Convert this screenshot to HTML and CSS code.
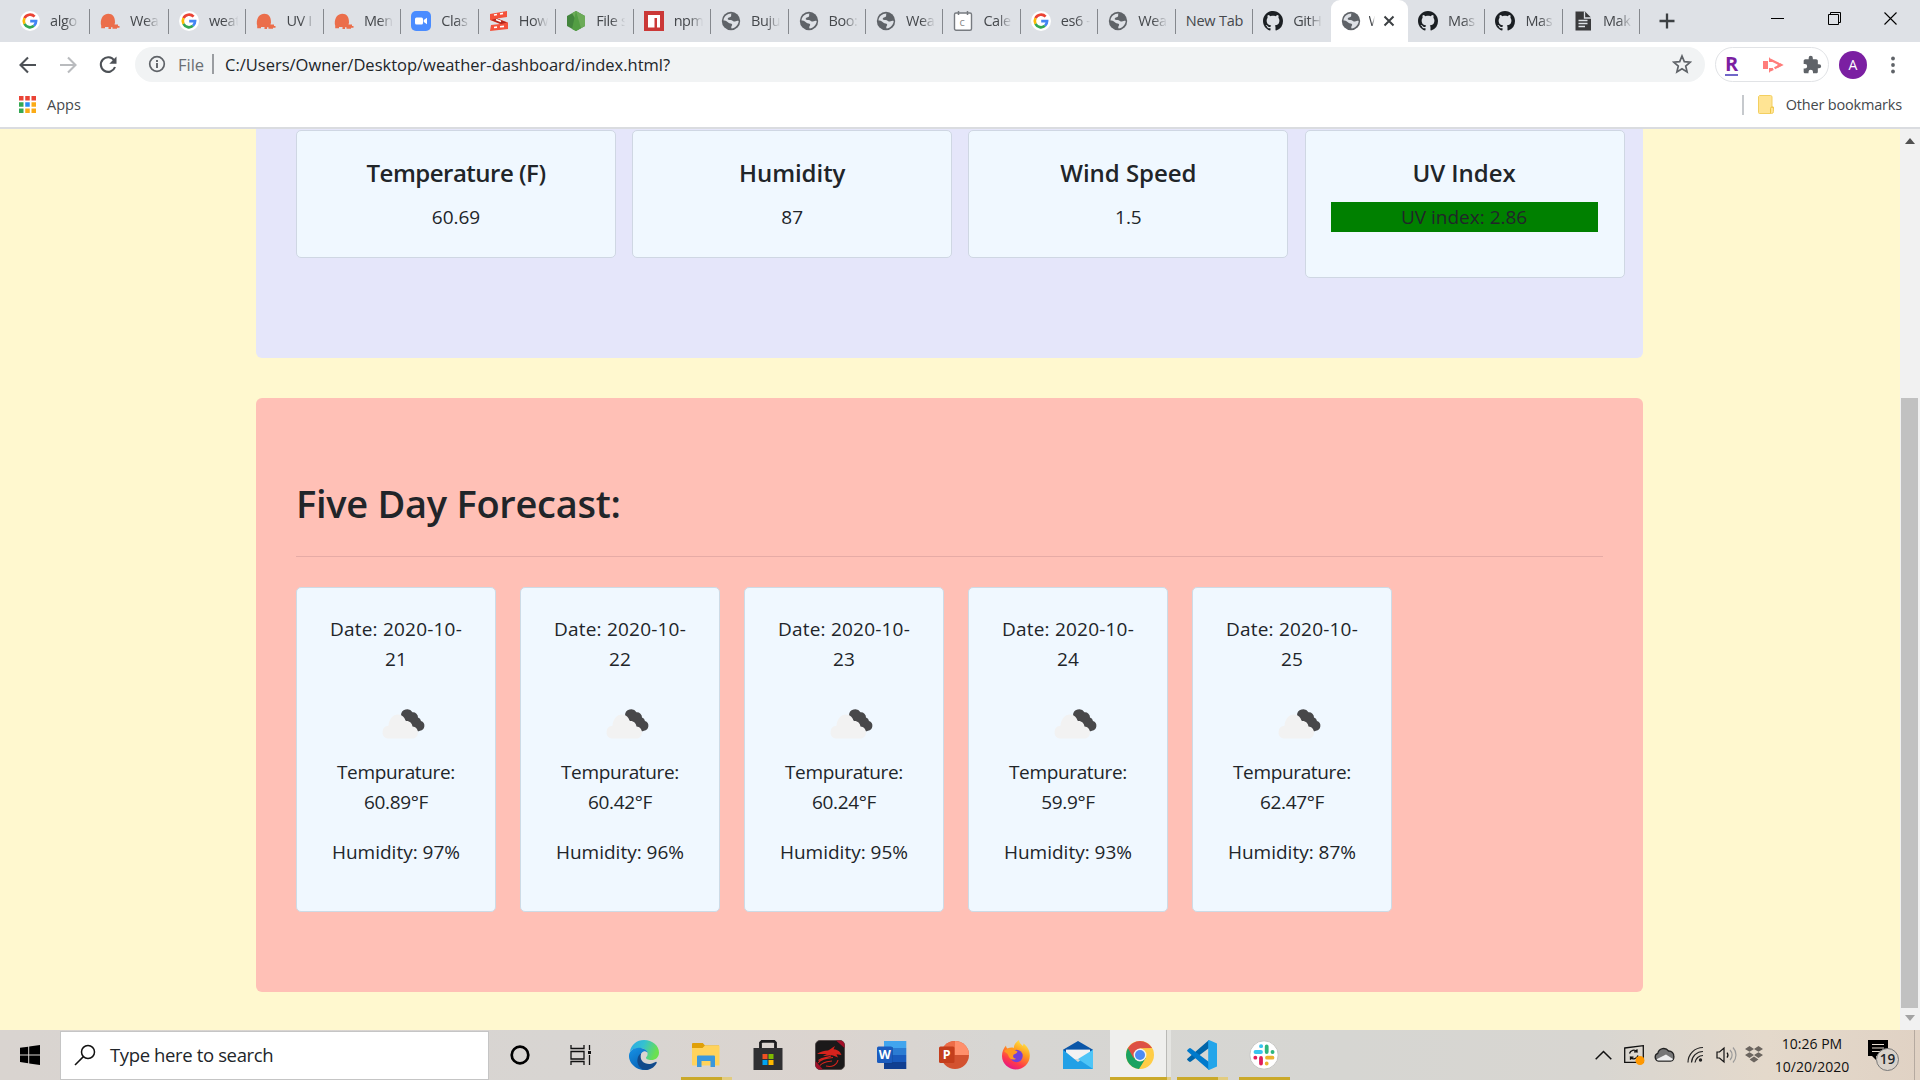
FILE: index.html
```html
<!DOCTYPE html>
<html lang="en">
<head>
<meta charset="utf-8">
<title>Weather Dashboard</title>
<link rel="stylesheet" href="styles.css">
</head>
<body>
<svg class="defs" width="0" height="0" aria-hidden="true">
  <symbol id="google" viewBox="0 0 20 20">
    <circle cx="10" cy="10" r="10" fill="#fff"/>
    <g fill="none" stroke-width="2.700">
      <path d="M14.600 5.600A6.200 6.200 0 0 0 4.500 7.200" stroke="#ea4335"/>
      <path d="M4.500 7.200A6.200 6.200 0 0 0 4.500 12.900" stroke="#fbbc05"/>
      <path d="M4.500 12.900A6.200 6.200 0 0 0 14 14.800" stroke="#34a853"/>
      <path d="M14 14.800A6.200 6.200 0 0 0 16.100 10.100H10.200" stroke="#4285f4"/>
    </g>
  </symbol>
  <symbol id="umbrella" viewBox="0 0 20 20">
    <path d="M.8 13C.6 6 4 2.700 8.300 2.700S15.200 6 15 11.500l-.5 2H18V15h1.500v1.700H17v1h-4.500v-1.500H11V18H8.500v-2H5v1.200H1.200V14.500Z" fill="#eb6e4b"/>
  </symbol>
  <symbol id="globe" viewBox="0 0 20 20">
    <circle cx="10" cy="10" r="9.200" fill="#5f6368"/>
    <path d="M10.500 2.500c-1 1.500.4 2-.8 3.200-1.200 1-2.700.6-3 2 0 1 1.200 1.400 3 1.400 1.800 0 2 1.500 3.300 1.500 1.500 0 3.200-1.600 4.700-.6C17.400 14 14.300 17 10.700 17.500c-1-1-.2-2.400.4-3.200.5-1.800-1.200-1.800-2.700-2.100C6.500 11.500 5 9 2.500 9.600 2.700 5.500 6.200 2.500 10.500 2.500Z" fill="#dee1e6"/>
    <path d="M12.200 3.100c-.6 1.600.8 2.500 2 3.300l2 .1C15.400 4.900 14 3.700 12.200 3.100Z" fill="#5f6368"/>
  </symbol>
  <symbol id="github" viewBox="0 0 16 16">
    <path fill="#1b1f23" d="M8 0C3.580 0 0 3.580 0 8c0 3.540 2.290 6.530 5.470 7.590.4.070.55-.17.55-.38 0-.19-.01-.82-.01-1.490-2.010.37-2.530-.49-2.690-.94-.09-.23-.48-.94-.82-1.130-.28-.15-.68-.52-.01-.53.63-.01 1.080.58 1.230.82.72 1.210 1.870.87 2.330.66.07-.52.28-.87.51-1.070-1.780-.2-3.640-.89-3.640-3.950 0-.87.31-1.590.82-2.150-.08-.2-.36-1.020.08-2.120 0 0 .67-.21 2.200.82.64-.18 1.320-.27 2-.27s1.360.09 2 .27c1.530-1.040 2.200-.82 2.200-.82.44 1.100.16 1.920.08 2.120.51.56.82 1.270.82 2.150 0 3.070-1.870 3.750-3.650 3.950.29.25.54.73.54 1.480 0 1.070-.01 1.930-.01 2.200 0 .21.15.46.55.38A8.010 8.010 0 0 0 16 8c0-4.420-3.580-8-8-8Z"/>
  </symbol>
  <symbol id="clouds" viewBox="0 0 46 32">
    <path d="M20 8.500a6.200 6.200 0 0 1 11.500-3.200 5 5 0 0 1 5.500 5.200 4.500 4.500 0 0 1 3 3.500 5 5 0 0 1-1 9.700 5.500 5.500 0 0 1-6.500-1.700L22 11Z" fill="#48484a"/>
    <path d="M6.500 31.500a6.500 6.500 0 0 1 1-12.800C8 12 12 7.500 17 7.500c4 0 7 3 7.500 6.500 4-.5 6.500 2 7 5.500 3 .3 5.500 2.500 5.500 6s-2.500 6-5.500 6Z" fill="#f2f2f2"/>
  </symbol>
</svg>

<header class="browser">
  <div class="tabstrip">
    <div class="tab"><svg class="fav"><use href="#google"/></svg><span>algo</span></div>
    <div class="tab"><svg class="fav"><use href="#umbrella"/></svg><span>Wea</span></div>
    <div class="tab"><svg class="fav"><use href="#google"/></svg><span>weat</span></div>
    <div class="tab"><svg class="fav"><use href="#umbrella"/></svg><span>UV I</span></div>
    <div class="tab"><svg class="fav"><use href="#umbrella"/></svg><span>Men</span></div>
    <div class="tab"><svg class="fav" viewBox="0 0 20 20"><rect width="20" height="20" rx="5" fill="#4a8cff"/><rect x="4" y="6.500" width="8" height="7" rx="1.500" fill="#fff"/><path d="M12.700 9 16 6.800v6.400L12.700 11Z" fill="#fff"/></svg><span>Clas</span></div>
    <div class="tab"><svg class="fav" viewBox="0 0 20 20"><path d="M1 3 18 0v6L8 7.500l11 4L19 18 1 20l1-6 9-1L1 9Z" fill="#f4523b"/><path d="m2 9 6-1.500 10 4-6 1.500Z" fill="#b3271c"/><path d="m5 4 3-.5M11 3l3-.6M7 8.500l5 2M5 16.500l3-.4M11 15.800l4-.4" stroke="#fff" stroke-width="1.600"/></svg><span>How</span></div>
    <div class="tab"><svg class="fav" viewBox="0 0 20 20"><path d="m10 0 9 5v10l-9 5-9-5V5Z" fill="#43853d"/><path d="m10 0 9 5v10l-4 2.300L6 2.300Z" fill="#6cab58"/><path d="M10 0 6 18l4 2 5-2.800Z" fill="#539e43"/></svg><span>File s</span></div>
    <div class="tab"><svg class="fav" viewBox="0 0 20 20"><path d="M0 0h20v20H0Z" fill="#cb3837"/><path d="M4 4h12v12.500h-3V7h-2.500v9.500H4Z" fill="#fff"/></svg><span>npm</span></div>
    <div class="tab"><svg class="fav"><use href="#globe"/></svg><span>Buju</span></div>
    <div class="tab"><svg class="fav"><use href="#globe"/></svg><span>Boo:</span></div>
    <div class="tab"><svg class="fav"><use href="#globe"/></svg><span>Wea</span></div>
    <div class="tab"><svg class="fav" viewBox="0 0 20 20"><rect x="1.500" y="2" width="17" height="17.200" rx="1.500" fill="#fff" stroke="#777b80" stroke-width="1.400"/><path d="M5.500 0v4M14.500 0v4" stroke="#777b80" stroke-width="1.500"/><text x="6.600" y="14.800" class="cal-letter">c</text></svg><span>Cale</span></div>
    <div class="tab"><svg class="fav"><use href="#google"/></svg><span>es6 -</span></div>
    <div class="tab"><svg class="fav"><use href="#globe"/></svg><span>Wea</span></div>
    <div class="tab plain"><span>New Tab</span></div>
    <div class="tab last"><svg class="fav"><use href="#github"/></svg><span>GitH</span></div>
    <div class="tab active"><svg class="fav"><use href="#globe"/></svg><span>W</span><svg class="close" viewBox="0 0 12 12"><path d="m1.500 1.500 9 9M10.500 1.500l-9 9" stroke="#3c4043" stroke-width="2"/></svg></div>
    <div class="tab"><svg class="fav"><use href="#github"/></svg><span>Mas</span></div>
    <div class="tab"><svg class="fav"><use href="#github"/></svg><span>Mas</span></div>
    <div class="tab"><svg class="fav" viewBox="0 0 20 20"><path d="M2.500 0.500H12l6 6v13H2.500Z" fill="#3a3a3c"/><path d="M11.500.5v6.500H18" fill="none" stroke="#dee1e6" stroke-width="1.300"/><path d="M5.500 9.500h9M5.500 12.500h9M5.500 15.500h6.500" stroke="#dee1e6" stroke-width="1.300"/></svg><span>Mak</span></div>
    <svg class="newtab" viewBox="0 0 16 16"><path d="M8 .5v15M.5 8h15" stroke="#3c4043" stroke-width="2.300"/></svg>
    <div class="winctl">
      <svg width="13" height="13" viewBox="0 0 13 13"><path d="M0 6.500h13" stroke="#000"/></svg>
      <svg width="13" height="13" viewBox="0 0 13 13" fill="none" stroke="#000"><path d="M.5 2.500h10v10H.5ZM2.500 2.500v-2h10v10h-2"/></svg>
      <svg width="13" height="13" viewBox="0 0 13 13"><path d="m.5.5 12 12M12.500.5l-12 12" stroke="#000" stroke-width="1.100"/></svg>
    </div>
  </div>

  <div class="toolbar">
    <svg class="nav" viewBox="0 0 20 20" fill="none" stroke="#4d5156" stroke-width="2.100"><path d="M18 10H3M10 2.500 2.500 10l7.500 7.500"/></svg>
    <svg class="nav" viewBox="0 0 20 20" fill="none" stroke="#b9bbbe" stroke-width="2.100"><path d="M2 10h15M10 2.500l7.500 7.500-7.500 7.500"/></svg>
    <svg class="nav" viewBox="0 0 20 20"><path d="M16.200 5.500A7.300 7.300 0 1 0 17 12" fill="none" stroke="#4d5156" stroke-width="2.100"/><path d="M18.500 1.500v7.200h-7.200Z" fill="#4d5156"/></svg>
    <div class="omnibox">
      <svg class="info" viewBox="0 0 18 18"><circle cx="9" cy="9" r="7.300" fill="none" stroke="#5f6368" stroke-width="1.700"/><path d="M9 8v5M9 5v1.900" stroke="#5f6368" stroke-width="1.900"/></svg>
      <span class="scheme">File</span><i></i><span class="url">C:/Users/Owner/Desktop/weather-dashboard/index.html?</span>
      <svg class="star" viewBox="0 0 20 20"><path d="m10 2 2.300 5.600 6 .5-4.600 3.900 1.400 5.900L10 14.800 4.900 17.900 6.300 12 1.700 8.100l6-.5Z" fill="none" stroke="#5f6368" stroke-width="1.700"/></svg>
    </div>
    <div class="extensions">
      <span class="rakuten">R</span>
      <svg class="recorder" width="22" height="18" viewBox="0 0 22 18"><path d="M1 5h5v8H1Z" fill="#ff7d7b"/><path d="M8 3.500 19 9 8 14.500" fill="none" stroke="#ff7d7b" stroke-width="2.400" stroke-dasharray="9 1.500"/><path d="M7 1v5h4ZM7 17v-5h4ZM20.500 9l-5-3v6Z" fill="#ff7d7b"/></svg>
      <svg width="20" height="20" viewBox="0 0 24 24"><path fill="#5f6368" d="M20.500 11H19V7c0-1.100-.9-2-2-2h-4V3.500a2.500 2.500 0 0 0-5 0V5H4c-1.100 0-2 .9-2 2v3.800h1.500a2.700 2.700 0 0 1 0 5.400H2V20c0 1.100.9 2 2 2h3.800v-1.500a2.700 2.700 0 0 1 5.400 0V22H17c1.100 0 2-.9 2-2v-4h1.500a2.500 2.500 0 0 0 0-5Z"/></svg>
    </div>
    <span class="avatar">A</span>
    <svg class="dots" viewBox="0 0 4 18" fill="#5f6368"><circle cx="2" cy="2.500" r="1.900"/><circle cx="2" cy="9" r="1.900"/><circle cx="2" cy="15.500" r="1.900"/></svg>
  </div>

  <div class="bookmarks">
    <svg width="17" height="17" viewBox="0 0 17 17"><path d="M0 0h4.500v4.500H0ZM6.250 0h4.500v4.500h-4.500ZM12.500 0H17v4.500h-4.500Z" fill="#ea4335"/><path d="M0 6.250h4.500v4.500H0ZM0 12.500h4.500V17H0Z" fill="#34a853"/><path d="M6.250 6.250h4.500v4.500h-4.500Z" fill="#2a8bf2"/><path d="M12.500 6.250H17v4.500h-4.500ZM6.250 12.500h4.500V17h-4.500ZM12.500 12.500H17V17h-4.500Z" fill="#fbab15"/></svg>
    <span class="apps">Apps</span>
    <i></i>
    <svg class="folder" viewBox="0 0 16 19"><path d="M1.500.5h11a1.500 1.500 0 0 1 1.500 1.500v10h1.500v4.500a2 2 0 0 1-2 2h-12a1 1 0 0 1-1-1v-16Z" fill="#ffe494" stroke="#f3cf60"/><path d="M12.500 18v-4.500a1.500 1.500 0 0 1 3 0" fill="none" stroke="#efc544"/></svg>
    <span class="other">Other bookmarks</span>
  </div>
</header>

<div class="viewport">
  <main class="page">
    <section class="current">
      <article class="metric"><h5 class="tight">Temperature (F)</h5><p>60.69</p></article>
      <article class="metric"><h5>Humidity</h5><p>87</p></article>
      <article class="metric"><h5>Wind Speed</h5><p>1.5</p></article>
      <article class="metric uv"><h5>UV Index</h5><p>UV index: 2.86</p></article>
    </section>
    <section class="forecast">
      <h2>Five Day Forecast:</h2>
      <hr>
      <div class="days">
        <article class="day"><p class="date">Date: 2020-10-<br>21</p><svg><use href="#clouds"/></svg><p class="temp">Tempurature:<br>60.89°F</p><p>Humidity: 97%</p></article>
        <article class="day"><p class="date">Date: 2020-10-<br>22</p><svg><use href="#clouds"/></svg><p class="temp">Tempurature:<br>60.42°F</p><p>Humidity: 96%</p></article>
        <article class="day"><p class="date">Date: 2020-10-<br>23</p><svg><use href="#clouds"/></svg><p class="temp">Tempurature:<br>60.24°F</p><p>Humidity: 95%</p></article>
        <article class="day"><p class="date">Date: 2020-10-<br>24</p><svg><use href="#clouds"/></svg><p class="temp">Tempurature:<br>59.9°F</p><p>Humidity: 93%</p></article>
        <article class="day"><p class="date">Date: 2020-10-<br>25</p><svg><use href="#clouds"/></svg><p class="temp">Tempurature:<br>62.47°F</p><p>Humidity: 87%</p></article>
      </div>
    </section>
  </main>
  <div class="scrollbar">
    <svg width="10" height="6" viewBox="0 0 10 6"><path d="M0 6h10L5 0Z" fill="#505050"/></svg>
    <div class="thumb"></div>
    <svg width="10" height="6" viewBox="0 0 10 6"><path d="M0 0h10L5 6Z" fill="#a3a3a3"/></svg>
  </div>
</div>

<footer class="taskbar">
  <div class="start"><svg width="20" height="20" viewBox="0 0 20 20"><path d="M0 2.800 8.200 1.700v7.700H0ZM9.200 1.500 20 0v9.400H9.200ZM0 10.400h8.200v7.800L0 17.100ZM9.200 10.400H20V20L9.200 18.400Z"/></svg></div>
  <div class="search"><svg width="22" height="22" viewBox="0 0 22 22" fill="none" stroke="#111" stroke-width="1.500"><circle cx="14" cy="8" r="6.500"/><path d="M9.400 12.600 1 21"/></svg><span>Type here to search</span></div>
  <div class="apps-row">
    <div class="app"><svg width="20" height="20" viewBox="0 0 20 20"><circle cx="10" cy="10" r="8.300" fill="none" stroke="#000" stroke-width="2.700"/></svg></div>
    <div class="app task-view"><svg width="22" height="20" viewBox="0 0 22 20" fill="none" stroke="#111" stroke-width="1.300"><path d="M1 0v3.500h13V0M1 6.500h13v7.500H1ZM1 20v-3.500h13V20M19.500 0v5M19.500 10v10"/><path d="M18 6h3v3h-3Z" fill="#111" stroke="none"/></svg></div>
    <div class="app"><svg width="30" height="30" viewBox="0 0 30 30">
      <defs><linearGradient id="e1" x1="0" y1="0" x2="1" y2=".3"><stop offset="0" stop-color="#2aa7e8"/><stop offset=".5" stop-color="#35c1d0"/><stop offset="1" stop-color="#6be04f"/></linearGradient><linearGradient id="e2" x1="0" y1="0" x2=".6" y2="1"><stop offset="0" stop-color="#1793e6"/><stop offset="1" stop-color="#0761b5"/></linearGradient></defs>
      <path d="M.8 12C2 4.500 8 0 15 0c8.500 0 15 5.800 15 12.500 0 5-3.800 7.500-7.500 7.500-4 0-5.500-1.300-5.500-2.300 0-.9 1.600-1.300 1.600-4C18.600 10.500 15 8 10.500 8 5.500 8 2 10 .8 12Z" fill="url(#e1)"/>
      <path d="M0 15C.5 10.500 5 7.700 9.700 7.700c4.500 0 8.400 2.400 8.900 5-1-1.200-2.500-1.500-3.600-1.500-3 1-4 4-3.800 6.300C11.700 24 16 28 20.500 29 17 30.500 12 30.300 8 28.200 3 25.500-.5 20.500 0 15Z" fill="url(#e2)"/>
      <path d="M12 13.500c-2 7 3.500 11 9 10.500 3-.3 5-2 6-2.200 1 0 .9 1 .4 1.700C25 27.700 21 30 16.500 30 11 29.500 7.500 24 8.500 19 9 16 10.300 14.500 12 13.500Z" fill="#114a8b"/></svg></div>
    <div class="app open stacked"><svg width="28" height="24" viewBox="0 0 28 24"><path d="M0 1.200C0 .5.500 0 1.200 0h9.600L13 2.500h14V9H0Z" fill="#e0a008"/><path d="M0 5h10.500L13 2.500h13.500c.8 0 1 .5 1 1V22.500H1c-.6 0-1-.4-1-1Z" fill="#ffd35c"/><path d="M5 24V13.700c0-.8.6-1.200 1.200-1.200h15.600c.7 0 1.200.5 1.200 1.200V24h-4.500v-6h-9v6Z" fill="#3a98dc"/></svg></div>
    <div class="app"><svg width="30" height="30" viewBox="0 0 30 30"><path d="M7.500 10V2.800L9 1.300h12l1.500 1.500V10" fill="none" stroke="#1d1d1f" stroke-width="2.800"/><path d="M.5 8h29v22h-29Z" fill="#303032"/><path d="M9.500 14h5v5h-5Z" fill="#f25022"/><path d="M15.500 14h5v5h-5Z" fill="#7fba00"/><path d="M9.500 20h5v5h-5Z" fill="#00a4ef"/><path d="M15.500 20h5v5h-5Z" fill="#ffb900"/></svg></div>
    <div class="app"><svg width="30" height="30" viewBox="0 0 30 30"><rect x=".5" y=".5" width="29" height="29" rx="4.500" fill="#1b191a" stroke="#544c4b"/><path d="M21 .5h4a4.500 4.500 0 0 1 4.500 4.500v3ZM.5 21v4A4.500 4.500 0 0 0 5 29.500h3Z" fill="#a40e28"/><path d="M2 14c3-2.500 7-3.200 11-3.500 2-.5 3.500-2.500 7-4.500l-1.500 3.200c3 .3 5 1.300 6.500 3l1.500 2.800-5-.8 1.500 3.300-5-2c-4-1-8 .8-10 .5 1-.8 3-1.500 4.500-1.500-3-.7-6-.5-10.500-.5Z" fill="#d6231d"/><path d="M3 23c3-4 8-5 15-5.500M3.500 20.500C7 17.500 12 18 16 16M11 26c6 1.500 11-1 12-6M5 25.500c3-4 8-4 12-4.500" fill="none" stroke="#d6231d" stroke-width="1.100"/></svg></div>
    <div class="app"><svg width="30" height="28" viewBox="0 0 30 28"><path d="M7 0h22.300v7H7Z" fill="#41a5ee"/><path d="M7 7h22.300v7H7Z" fill="#2b7cd3"/><path d="M7 14h22.300v7H7Z" fill="#185abd"/><path d="M7 21h22.300v7H7Z" fill="#103f91"/><path d="M7 6h9v17H7Z" fill="#0d3c80" opacity=".5"/><rect y="5.500" width="15.500" height="16.500" rx="1.500" fill="#1b5cbe"/><text x="7.700" y="18" class="office">W</text></svg></div>
    <div class="app"><svg width="30" height="28" viewBox="0 0 30 28"><circle cx="16" cy="14" r="14" fill="#d35230"/><path d="M16 14V0a14 14 0 0 0-14 14Z" fill="#ed6c47"/><path d="M16 14V0a14 14 0 0 1 14 14Z" fill="#ff8f6b"/><rect y="5.500" width="15.500" height="16.500" rx="1.500" fill="#c43e1c"/><text x="7.700" y="18" class="office">P</text></svg></div>
    <div class="app"><svg width="30" height="30" viewBox="0 0 30 30">
      <defs><linearGradient id="f1" x1=".8" y1="0" x2=".3" y2="1"><stop offset="0" stop-color="#fff04a"/><stop offset=".4" stop-color="#ff9b1e"/><stop offset=".75" stop-color="#ff3a4a"/><stop offset="1" stop-color="#e3158a"/></linearGradient></defs>
      <path d="M5 5.500c0 1.500.8 2.500 1.500 3C9 7.500 11 7.300 13 8c-.5-3 2-6 5-8 .2 3 2 4 4 6l.6-2.500C26.500 6.500 29 11 28.800 16 28.500 24 22 29.500 15 29.500S1 24 1 16c0-4 1.500-8 4-10.500Z" fill="url(#f1)"/><circle cx="15.500" cy="16" r="6.200" fill="#7440d8"/><path d="M3 11c4-3.500 8-2.500 10.500-1l3 1.500c-.8 2.300-3 2.800-4 3.200-1 2 .3 3.800 2.500 4-2.500 2-7 .5-8-4C6 13 4 12.500 3 11Z" fill="#ff9a21"/></svg></div>
    <div class="app"><svg width="30" height="28" viewBox="0 0 30 28"><path d="M0 8.800 15 0l15 8.800V12H0Z" fill="#0a56a8"/><path d="M3 8.800h24V18H3Z" fill="#f2f2f2"/><path d="M0 8.800 15 21l15-12.200V28H0Z" fill="#22a0e6"/><path d="M3 8.800h24L15 18Z" fill="#f2f2f2"/><path d="m15 18 15-9.200V28Z" fill="#4ec5f7"/></svg></div>
    <div class="app open current-app"><svg width="28" height="28" viewBox="0 0 28 28"><circle cx="14" cy="14" r="14" fill="#ffcd46"/><path d="M14 14 1.900 7A14 14 0 0 0 13 28l6.800-11Z" fill="#1aa260"/><path d="M26.100 7A14 14 0 0 0 1.900 7l5.600 10L14 7.300Z" fill="#dd5144"/><circle cx="14" cy="14" r="6.400" fill="#f3f3f3"/><circle cx="14" cy="14" r="5" fill="#4c8bf5"/></svg></div>
    <div class="app open stacked"><svg width="30" height="30" viewBox="0 0 30 30"><path d="M2 21.500.6 20.200a1 1 0 0 1 0-1.600L22 0v8L4 21.500a1.500 1.500 0 0 1-2 0Z" fill="#0065a9"/><path d="M2 8.500.6 9.800a1 1 0 0 0 0 1.600L22 30v-8L4 8.500a1.500 1.500 0 0 0-2 0Z" fill="#007acc"/><path d="M22 0 30 3.500v23L22 30c-.8-.5-.8-1-.8-2V2c0-1 0-1.500.8-2Z" fill="#24a5ea"/></svg></div>
    <div class="app open"><svg width="30" height="30" viewBox="0 0 30 30"><circle cx="15" cy="15" r="14.200" fill="#fff" stroke="#c7c7c4"/><g stroke-width="3.800" stroke-linecap="round"><path d="M6.500 12h5.500M12 6.200h.2" stroke="#36c5f0"/><path d="M17.700 6.500V12M23.500 12h.1" stroke="#2eb67d"/><path d="M18 17.700h5.500M17.700 23.500v.1" stroke="#ecb22e"/><path d="M12 18v5.500M6.300 17.700h.1" stroke="#e01e5a"/></g></svg></div>
  </div>
  <div class="tray">
    <svg width="17" height="10" viewBox="0 0 17 10"><path d="M.7 9.300 8.500 1.500l7.800 7.800" fill="none" stroke="#111" stroke-width="1.500"/></svg>
    <svg width="21" height="20" viewBox="0 0 21 20"><path d="M.7 3 19.300.7v16.600H.7Z" fill="none" stroke="#111" stroke-width="1.300"/><path d="M5.500 8.500A4.500 4.500 0 0 1 13 6.500V4.300M13 6.800h-3M14 10.500A4.500 4.500 0 0 1 6.500 12.500v2.200M6.500 12.200h3" fill="none" stroke="#111" stroke-width="1.300"/><circle cx="16" cy="15.500" r="4.500" fill="#ff9800"/></svg>
    <svg width="21" height="15" viewBox="0 0 21 15"><path d="M4.500 14a4 4 0 0 1-.7-7.700A6 6 0 0 1 14.500 4a5 5 0 0 1 5.300 5.500c.5 2.500-1 4.500-3.300 4.500Z" fill="#777" stroke="#222" stroke-width="1.300"/><path d="M2.500 12.200 12 7.500l7 4.500c-.5 1.200-1.500 1.500-2.500 1.500h-12c-.8 0-1.500-.5-2-1.300Z" fill="#eee"/></svg>
    <svg width="17" height="17" viewBox="0 0 17 17" fill="none" stroke="#222" stroke-width="1.200"><path d="M1 16.500A15 15 0 0 1 16 1.500M4.500 16.500A11.500 11.500 0 0 1 16 5.500M8 16.500A8 8 0 0 1 16 9.500"/><circle cx="13.500" cy="14" r="1.700" fill="#222" stroke="none"/></svg>
    <svg width="21" height="18" viewBox="0 0 21 18" fill="none" stroke="#111" stroke-width="1.200"><path d="M1 6v6h2.500L8 16V2L3.500 6Z"/><path d="M11 6.500a4 4 0 0 1 0 5"/><path d="M14 4a7 7 0 0 1 0 10M17 1.500a11 11 0 0 1 0 15" stroke="#999"/></svg>
    <svg width="18" height="17" viewBox="0 0 18 17" fill="#6b655f"><path d="m4.500 0 4.500 2.900-4.500 2.900L0 2.900ZM13.500 0 18 2.900l-4.500 2.900L9 2.900ZM4.500 6.200 9 9.100l-4.500 2.900L0 9.100ZM13.500 6.200 18 9.100l-4.500 2.900L9 9.100ZM9 10.600l4.400 2.900L9 16.400l-4.400-2.900Z"/></svg>
    <div class="clock"><span>10:26 PM</span><span>10/20/2020</span></div>
    <div class="notify"><svg width="20" height="20" viewBox="0 0 20 20"><path d="M0 0h20v16H8v4l-4-4H0Z"/><path d="M4 4.500h12M4 8h12M4 11.500h8" stroke="#e5dcd0" stroke-width="1.200"/></svg><b>19</b></div>
    <i class="peek"></i>
  </div>
</footer>
</body>
</html>
```
FILE: styles.css
```css
* { box-sizing: border-box; }
body {
  margin: 0;
  width: 1920px;
  height: 1080px;
  overflow: hidden;
  display: flex;
  flex-direction: column;
  font-family: "Open Sans", "Noto Sans", sans-serif;
  color: #212529;
}
svg { display: block; flex: none; }
.defs { position: absolute; }

/* Browser chrome */
.browser { height: 129px; background: #fff; border-bottom: 2px solid #dadce0; flex: none; }
.tabstrip { height: 42px; background: #dee1e6; display: flex; align-items: center; padding-left: 12px; }
.tab {
  width: 77.450px;
  height: 25px;
  display: flex;
  align-items: center;
  gap: 10px;
  padding: 0 0 1px 10px;
  border-right: 1.500px solid #85888d;
  font-size: 14.500px;
  letter-spacing: -.4px;
  color: #45484c;
  flex: none;
}
.tab:first-child { width: 78px; padding-left: 8px; }
.tab:nth-child(2) { width: 79px; }
.tab span {
  width: 30px;
  overflow: hidden;
  white-space: nowrap;
  -webkit-mask-image: linear-gradient(90deg, #000 50%, transparent 98%);
  mask-image: linear-gradient(90deg, #000 50%, transparent 98%);
}
.tab.plain span { width: 62px; letter-spacing: -.2px; -webkit-mask-image: none; mask-image: none; }
.tab.last, .tab.active { border-right-color: transparent; }
.tab.active {
  height: 42px;
  background: #fff;
  border: 0;
  border-radius: 9px 9px 0 0;
  gap: 8px;
}
.tab.active span { width: 6px; }
.tab.active .close { width: 12px; height: 12px; }
.fav { width: 20px; height: 20px; }
.cal-letter { font-size: 11px; fill: #888; }
.newtab { width: 16px; height: 16px; margin-left: 19px; }
.winctl { display: flex; gap: 43.500px; margin: 0 23px 5px auto; }

.toolbar { height: 44px; display: flex; align-items: center; padding: 1px 0 0 17.500px; }
.nav { width: 20px; height: 20px; margin-right: 20px; }
.omnibox {
  width: 1570px;
  height: 35px;
  margin-left: -2.500px;
  border-radius: 18px;
  background: #f1f3f4;
  display: flex;
  align-items: center;
  padding: 0 13px 1px 13px;
  font-size: 16.500px;
}
.info { width: 18px; height: 18px; }
.scheme { margin-left: 12px; width: 26px; color: #6a6e73; }
.omnibox i { width: 2px; height: 20px; margin: 0 11px 0 8px; background: #9a9da1; }
.star { width: 20px; height: 20px; margin-left: auto; }
.extensions {
  width: 114px;
  height: 35px;
  margin-left: 10px;
  border: 1.500px solid #e1e3e6;
  border-radius: 18px;
  display: flex;
  align-items: center;
  padding: 0 6px 0 9px;
}
.rakuten {
  font-size: 20px;
  font-weight: 700;
  line-height: 20px;
  color: #7b1fa2;
  border-bottom: 2px solid #7067c8;
}
.recorder { margin: 0 18px 0 auto; }
.avatar {
  width: 28px;
  height: 28px;
  margin-left: 10px;
  border-radius: 50%;
  background: #7b1fa2;
  color: #fff;
  font-size: 14px;
  line-height: 28px;
  text-align: center;
}
.dots { width: 4px; height: 18px; margin-left: 24px; }
.bookmarks {
  height: 41px;
  display: flex;
  align-items: center;
  padding: 0 18px 4px 19px;
  font-size: 14.500px;
  color: #45484c;
}
.apps { margin-left: 11px; }
.other { letter-spacing: -.18px; }
.bookmarks i { width: 1.500px; height: 20px; margin-left: auto; background: #c6c9cd; }
.folder { width: 16px; height: 19px; margin: 0 12px 0 14px; }

/* Dashboard page */
.viewport { height: 901px; display: flex; background: #fff8cf; flex: none; }
.page { flex: 1; padding-left: 256px; }
.current, .forecast { width: 1387px; }
.current {
  height: 229px;
  padding: 1px 0 0 40px;
  display: flex;
  align-items: flex-start;
  gap: 16.200px;
  border-radius: 0 0 6px 6px;
  background: #e5e6fa;
}
.metric {
  width: 320px;
  height: 128px;
  padding: 24px;
  border: 1px solid #cfd7e3;
  border-radius: 5px;
  background: #f0f8ff;
  text-align: center;
}
.metric.uv { height: 148px; padding: 24px 26px 24px 25px; }
.metric h5 { margin: 3px 0 14px; font-size: 24px; line-height: 30px; font-weight: 600; letter-spacing: -.05px; }
.metric h5.tight { letter-spacing: -.5px; }
.metric p { margin: 0; padding-top: 1px; font-size: 19px; line-height: 29px; }
.metric.uv p { background: #008000; }
.forecast {
  height: 594px;
  margin-top: 40px;
  padding: 79px 40px 0;
  border-radius: 6px;
  background: #ffc0b6;
}
.forecast h2 { margin: 0; font-size: 38px; line-height: 52px; font-weight: 600; letter-spacing: -.28px; }
.forecast hr { margin: 27px 0 30px; border: 0; height: 1px; background: #e6aba6; }
.days { display: flex; gap: 24px; }
.day {
  width: 200px;
  height: 325px;
  padding-top: 26px;
  border: 1px solid #cddbe6;
  border-radius: 5px;
  background: #f0f8ff;
  text-align: center;
  font-size: 19px;
  line-height: 30px;
}
.day p { margin: 0 0 20px; }
.day .date { letter-spacing: .2px; }
.day .temp { letter-spacing: -.35px; }
.day svg { width: 46px; height: 32px; margin: 33px 0 18px 84px; }
.scrollbar {
  width: 20px;
  background: #f1f1f1;
  display: flex;
  flex-direction: column;
  align-items: center;
  padding: 9px 0;
}
.thumb { width: 17px; height: 613px; margin: 254px 1px 7px 0; background: #c1c1c1; }

/* Taskbar */
.taskbar {
  height: 50px;
  display: flex;
  background: linear-gradient(90deg, #d9d4d0 0, #d8d5d2 30%, #dbd4cf 43%, #d7d6d3 52%, #d6d6d2 70%, #d8d6d1 83%, #e4d9cb 92%, #e0d2c4 100%);
}
.start { width: 60px; display: flex; align-items: center; justify-content: center; }
.search {
  width: 429px;
  height: 49px;
  margin-top: 1px;
  border: 1px solid #c5c5c5;
  background: #fff;
  display: flex;
  align-items: center;
  gap: 14px;
  padding: 0 0 1px 13px;
  font-size: 18.500px;
  letter-spacing: -.37px;
}
.search span { margin-top: -2px; }
.apps-row { display: flex; }
.app { width: 62px; height: 50px; display: flex; align-items: center; justify-content: center; }
.app.task-view { padding-right: 3px; }
.app.open {
  background: linear-gradient(90deg, #caa92a, #caa92a) 6px 100% / 51px 3px no-repeat;
}
.app.stacked {
  background: linear-gradient(90deg, #caa92a 41px, #e2cc80 41px) 6px 100% / 51px 3px no-repeat;
}
.app.current-app {
  background:
    linear-gradient(90deg, #caa92a 57px, #e2cc80 57px) 1px 100% / 61px 3px no-repeat,
    linear-gradient(90deg, #efefed 56px, #b9b9b6 56px 57px, #e4e4e1 57px) 1px 0 / 61px 50px no-repeat;
}
.office { font-size: 12.500px; font-weight: 700; fill: #fff; text-anchor: middle; }
.tray { margin-left: auto; display: flex; align-items: center; padding-right: 5px; }
.tray > svg { margin: 0 12px 1px 0; }
.tray > svg:nth-child(2) { margin-right: 9px; }
.tray > svg:nth-child(5) { margin-right: 8px; }
.tray > svg:nth-child(6) { margin-right: 11px; }
.clock {
  width: 76px;
  display: flex;
  flex-direction: column;
  align-items: center;
  padding-bottom: 1px;
  font-size: 14px;
  line-height: 23px;
  color: #111;
}
.notify { position: relative; margin: 0 15px 0 18px; width: 31px; height: 30px; }
.notify b {
  position: absolute;
  left: 8px;
  top: 8px;
  width: 23px;
  height: 23px;
  border: 1.500px solid #777;
  border-radius: 50%;
  background: #d9d2ca;
  font-size: 13.500px;
  line-height: 20px;
  font-weight: 600;
  text-align: center;
}
.peek { width: 1px; height: 50px; background: #b5aaa0; }
```
